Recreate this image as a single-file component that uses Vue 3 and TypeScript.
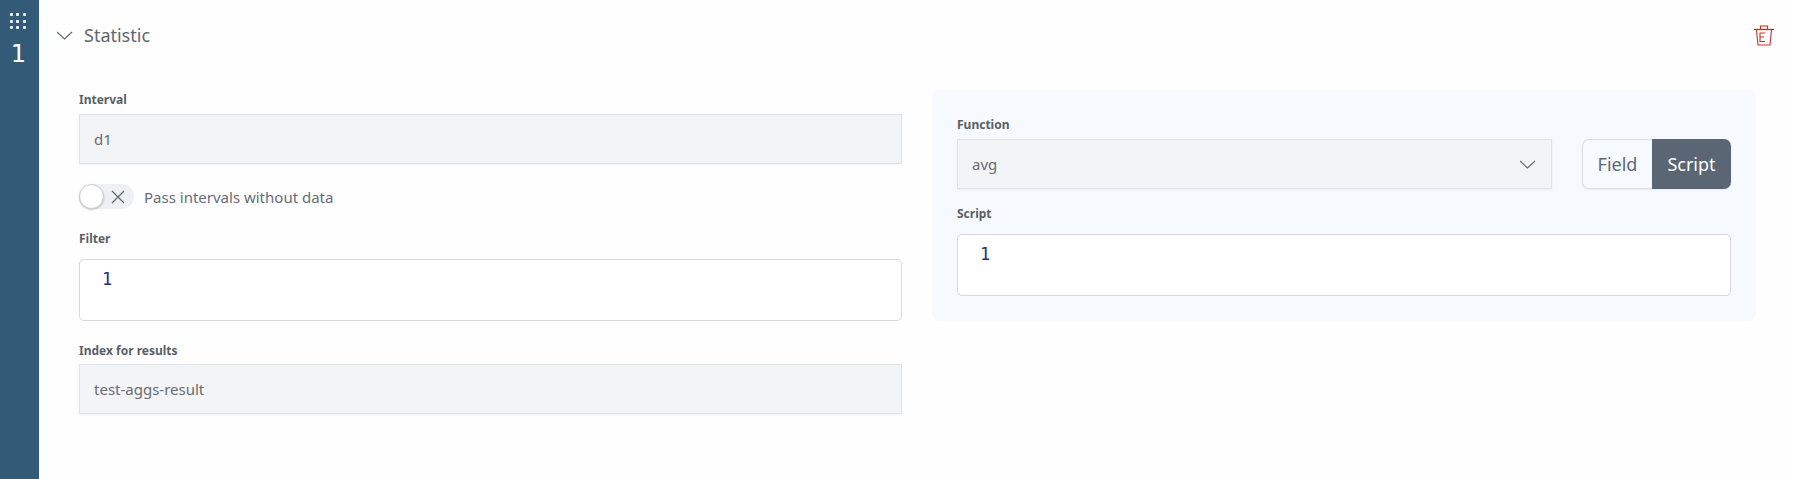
<script setup lang="ts">
const dots: number[] = [0, 1, 2, 3, 4, 5, 6, 7, 8]
</script>

<template>
  <div class="page">
    <aside class="rail">
      <div class="grip">
        <span v-for="d in dots" :key="d" class="dot"></span>
      </div>
      <div class="num">1</div>
    </aside>
    <main class="main">
      <header class="head">
        <svg class="chev" width="16" height="9" viewBox="0 0 16 9" fill="none">
          <path d="M0 1l7.5 7 7.5-7" stroke="#5b6670" stroke-width="1.1" />
        </svg>
        <span class="title">Statistic</span>
        <svg class="trash" width="20" height="21" viewBox="0 0 20 21" fill="none" stroke="#c5302e" stroke-width="1.1">
          <path d="M0 4.5h20" stroke-width="1.3" />
          <path d="M6.5 4V1h7v3" />
          <path d="M2.5 5l1.5 15h12L17.5 5" />
          <path d="M11 8H6v8.5h5M6 12h4" />
        </svg>
      </header>
      <div class="cols">
        <section class="left">
          <label class="lbl">Interval</label>
          <div class="input">d1</div>
          <div class="toggle-row">
            <div class="toggle">
              <span class="knob"></span>
              <svg width="14" height="14" viewBox="0 0 14 14" fill="none">
                <path d="M1 1l12 12M13 1L1 13" stroke="#5b6670" stroke-width="1.1" />
              </svg>
            </div>
            <span class="toggle-text">Pass intervals without data</span>
          </div>
          <label class="lbl ed-lbl filter-lbl">Filter</label>
          <div class="editor"><span class="ln">1</span></div>
          <label class="lbl index-lbl">Index for results</label>
          <div class="input">test-aggs-result</div>
        </section>
        <section class="panel">
          <div class="fn-row">
            <div class="fn-col">
              <label class="lbl">Function</label>
              <div class="input select">
                <span>avg</span>
                <svg width="16" height="9" viewBox="0 0 16 9" fill="none">
                  <path d="M0 1l7.5 7 7.5-7" stroke="#5b6670" stroke-width="1.1" />
                </svg>
              </div>
            </div>
            <div class="seg">
              <button class="seg-btn">Field</button>
              <button class="seg-btn active">Script</button>
            </div>
          </div>
          <label class="lbl ed-lbl script-lbl">Script</label>
          <div class="editor"><span class="ln">1</span></div>
        </section>
      </div>
    </main>
  </div>
</template>

<style>
html, body { margin: 0; background: #fefefe; }
</style>

<style scoped>
.page {
  display: flex;
  width: 1793px;
  height: 479px;
  overflow: hidden;
  font-family: "Noto Sans", sans-serif;
  color: #5b6066;
}
.rail {
  width: 39px;
  flex: none;
  background: #335b77;
  display: flex;
  flex-direction: column;
  align-items: center;
  padding-top: 13px;
  box-sizing: border-box;
}
.grip {
  display: grid;
  grid-template-columns: repeat(3, 3px);
  grid-auto-rows: 3px;
  gap: 3.5px;
  margin-left: -3.5px;
}
.dot { width: 3px; height: 3px; border-radius: 1px; background: #f2f5f7; }
.num {
  margin-top: 10px;
  font-family: "DejaVu Sans", sans-serif;
  font-size: 24px;
  line-height: 30px;
  color: #fff;
  margin-left: -2px;
}
.main {
  flex: 1;
  padding-left: 18px;
  padding-right: 37px;
  min-width: 0;
}
.head {
  height: 70px;
  display: flex;
  align-items: center;
}
.chev { margin-right: 11px; }
.title { font-size: 18px; color: #5f6870; }
.trash { margin-left: auto; margin-right: -18px; }
.cols {
  display: flex;
  gap: 30px;
  padding-left: 22px;
  padding-top: 20px;
  align-items: flex-start;
}
.left { width: 823px; flex: none; padding-top: 2px; }
.lbl {
  display: block;
  font-size: 12px;
  font-weight: 700;
  line-height: 16px;
  color: #5a5f64;
  margin-bottom: 6px;
}
.input {
  height: 50px;
  box-sizing: border-box;
  background: #f3f4f6;
  border: 1px solid #e0e2e6;
  box-shadow: 0 1px 2px rgba(0, 0, 0, 0.05);
  padding: 0 14px;
  display: flex;
  align-items: center;
  font-size: 15px;
  color: #686c72;
}
.toggle-row {
  display: flex;
  align-items: center;
  margin-top: 20px;
  height: 25px;
}
.toggle {
  width: 55px;
  height: 25px;
  border-radius: 13px;
  background: #eff0f3;
  display: flex;
  align-items: center;
  justify-content: space-between;
  padding-right: 9px;
  box-sizing: border-box;
}
.knob {
  width: 25px;
  height: 25px;
  box-sizing: border-box;
  border-radius: 50%;
  background: #fff;
  border: 1px solid #c9ccd1;
  box-shadow: 0 1px 2px rgba(0, 0, 0, 0.2);
}
.toggle-text { margin-left: 10px; font-size: 15px; color: #696d73; }
.ed-lbl { margin-bottom: 12px; }
.filter-lbl { margin-top: 22px; }
.index-lbl { margin-top: 22px; margin-bottom: 5px; }
.editor {
  height: 62px;
  box-sizing: border-box;
  background: #fff;
  border: 1px solid #d6d8de;
  border-radius: 5px;
  padding-left: 22px;
  padding-top: 7px;
  font-family: "DejaVu Sans Mono", monospace;
  font-size: 17px;
  line-height: 24px;
}
.ln { color: #1f2f80; }
.panel {
  flex: 1;
  height: 231px;
  box-sizing: border-box;
  background: #f6f9fd;
  border-radius: 8px;
  padding: 27px 25px 25px;
}
.fn-row { display: flex; gap: 30px; align-items: flex-end; }
.fn-col { flex: 1; }
.select { justify-content: space-between; padding-right: 15px; }
.seg {
  display: flex;
  height: 50px;
  border-radius: 7px;
  box-shadow: 0 1px 2px rgba(0, 0, 0, 0.06);
}
.seg-btn {
  border: 1px solid #d9dce2;
  border-right: 0;
  border-radius: 7px 0 0 7px;
  background: #f6f9fd;
  font: inherit;
  font-size: 18px;
  color: #5f6870;
  padding: 0;
  width: 70px;
}
.seg-btn.active {
  background: #5a6674;
  border: 0;
  border-radius: 0 7px 7px 0;
  color: #fff;
  width: 79px;
}
.script-lbl { margin-top: 17px; }
</style>
